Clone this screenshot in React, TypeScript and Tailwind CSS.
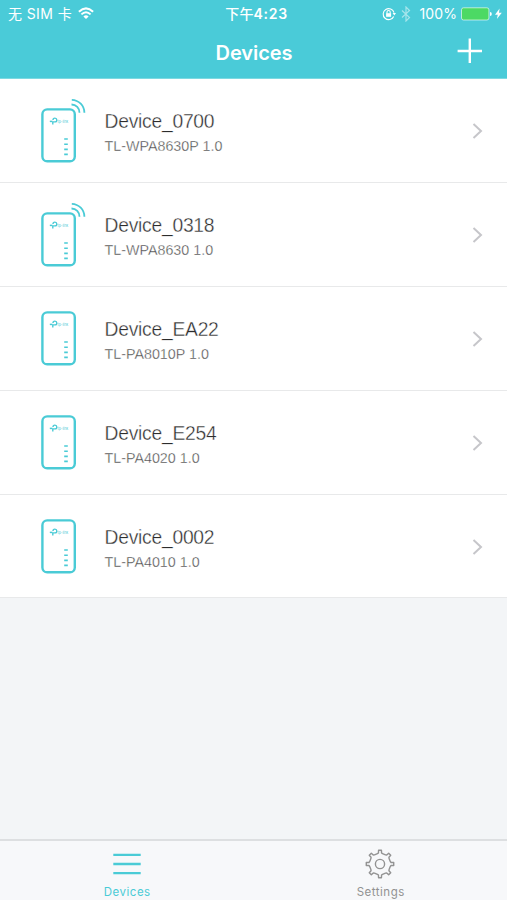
import React from 'react';

type Device = { name: string; model: string; wireless: boolean };

const devices: Device[] = [
  { name: 'Device_0700', model: 'TL-WPA8630P 1.0', wireless: true },
  { name: 'Device_0318', model: 'TL-WPA8630 1.0', wireless: true },
  { name: 'Device_EA22', model: 'TL-PA8010P 1.0', wireless: false },
  { name: 'Device_E254', model: 'TL-PA4020 1.0', wireless: false },
  { name: 'Device_0002', model: 'TL-PA4010 1.0', wireless: false },
];

function Adapter({ wireless }: { wireless: boolean }) {
  return (
    <svg width="50" height="70" viewBox={wireless ? '0 0 50 70' : '0 5 50 70'} fill="none" stroke="#4acbd6" className="block shrink-0">
      <rect x="4.4" y="14.4" width="32.4" height="51.8" rx="4.8" strokeWidth="2.4" />
      <path d="M14.8 29.4V26.9H17A1.9 1.9 0 1 0 15 25" strokeWidth="1.4" />
      <path d="M11.8 26.4H14.4" strokeWidth="1.5" />
      <text x="19.6" y="28" fontSize="4" fill="#4acbd6" stroke="none" textLength="10.5" lengthAdjust="spacingAndGlyphs" className="font-['Inter',sans-serif]">tp-link</text>
      <path d="M26.2 44H29.8M26.2 49.3H29.8M26.2 54.4H29.8M26.2 59.4H29.8" strokeWidth="1.6" />
      {wireless && <path d="M33.5 9.5A8 8 0 0 1 41.5 17.8M33.8 4.8A13 13 0 0 1 46.4 17.8" strokeWidth="1.8" />}
    </svg>
  );
}

function gearPath() {
  const profile: [number, number][] = [[-14, 10.6], [-8, 11.2], [-6, 13.8], [6, 13.8], [8, 11.2], [14, 10.6]];
  const points: string[] = [];
  for (let tooth = 0; tooth < 8; tooth++) {
    for (const [deg, r] of profile) {
      const a = ((tooth * 45 + deg) * Math.PI) / 180;
      points.push(`${(15 + r * Math.sin(a)).toFixed(2)} ${(15 - r * Math.cos(a)).toFixed(2)}`);
    }
  }
  return `M${points.join('L')}Z`;
}

function StatusBar() {
  return (
    <div className="flex h-[27px] items-center justify-between pl-[8px] pr-[5px] text-white">
      <div className="flex w-[160px] items-center">
        <span className="whitespace-nowrap text-[14px] leading-[18px] tracking-[0.4px]">无 SIM 卡</span>
        <svg width="16" height="13" viewBox="0 0 16 13" fill="none" stroke="white" strokeWidth="2" className="ml-[6px]">
          <path d="M.9 4.8Q8-2 15.1 4.8M3.4 7.4Q8 3 12.6 7.4" />
          <path d="M5.4 9.4Q8 7 10.6 9.4L8 12Z" fill="white" stroke="none" />
        </svg>
      </div>
      <span className="ml-[3px] whitespace-nowrap text-[14px] font-semibold leading-[18px] tracking-[0.7px]"><span className="font-medium tracking-[0.2px]">下午</span>4:23</span>
      <div className="flex w-[160px] items-center justify-end">
        <svg width="14" height="14" viewBox="0 0 14 14" fill="none" stroke="white" strokeWidth="1.1">
          <path d="M11.7 9.4A5.5 5.5 0 1 1 12 5.7" />
          <path d="M10.6 6H14L12.3 8.4Z" fill="white" stroke="none" />
          <rect x="4.1" y="6.2" width="5" height="3.6" fill="white" stroke="none" />
          <path d="M5 6.4V5.1a1.6 1.6 0 0 1 3.2 0V6.4" />
        </svg>
        <svg width="10" height="16" viewBox="0 0 10 16" fill="none" stroke="white" strokeOpacity=".5" strokeWidth="1.2" className="ml-[5px]">
          <path d="M1 4.5L8.5 11.5L5 15V1L8.5 4.5L1 11.5" />
        </svg>
        <span className="ml-[8px] text-[14px] leading-[18px] tracking-[0.1px]">100%</span>
        <svg width="32" height="14" viewBox="0 0 32 14" className="ml-[4px]">
          <rect x=".5" y=".8" width="27.4" height="12.2" rx="2" fill="#4cd964" stroke="white" strokeOpacity=".6" />
          <path d="M29 5Q30.8 5 30.8 7T29 9Z" fill="white" />
        </svg>
        <svg width="7" height="12" viewBox="0 0 7 12" fill="white" className="ml-[2px]"><path d="M4.6 0.5L0 6.7H2.8L1.9 11L6.8 4.8H4Z" /></svg>
      </div>
    </div>
  );
}

function Tab({ label, active, children }: { label: string; active?: boolean; children: React.ReactNode }) {
  return (
    <button className={`flex flex-1 flex-col items-center pt-[8px] ${active ? 'text-[#4acbd6]' : 'text-[#929292]'}`}>
      <span className="flex h-[30px] items-center">{children}</span>
      <span className="ml-[1px] mt-[6px] text-[11.5px] leading-[14px] tracking-[0.5px]">{label}</span>
    </button>
  );
}

export default function App() {
  return (
    <main className="flex h-[900px] w-[507px] flex-col overflow-hidden bg-[#f3f5f7] font-['Inter','Noto_Sans_CJK_SC',sans-serif]">
      <header className="h-[79px] shrink-0 border-b border-[#7dd9e1] bg-[#4acbd8]">
        <StatusBar />
        <div className="grid h-[51px] grid-cols-[1fr_auto_1fr] items-center text-white">
          <span />
          <h1 className="ml-[1px] text-[20px] font-semibold leading-[24px] tracking-[-0.05px]">Devices</h1>
          <svg width="26" height="26" viewBox="0 0 26 26" stroke="white" strokeWidth="2.4" className="mr-[24px] -mt-[4px] justify-self-end"><path d="M.6 13H25M12.8 .6V25" /></svg>
        </div>
      </header>
      <ul className="shrink-0 bg-white">
        {devices.map((device) => (
          <li key={device.name} className="flex h-[103.9px] border-b border-[#e8e9ea] pl-[38px] pr-[23px] pt-[16px]">
            <Adapter wireless={device.wireless} />
            <div className="ml-[16.5px] flex-1 pt-[14px] font-['Liberation_Sans',Arial,sans-serif] [-webkit-text-stroke:0.35px_white]">
              <div className="text-[19.3px] leading-[25px] tracking-[-0.25px] text-[#2c2c2c]">{device.name}</div>
              <div className="mt-[2px] text-[14.3px] leading-[21px] text-[#444]">{device.model}</div>
            </div>
            <svg width="12" height="18" viewBox="0 0 12 18" fill="none" stroke="#c6c6ca" strokeWidth="2" className="mt-[27px]"><path d="M1.5 2L9 9L1.5 16" /></svg>
          </li>
        ))}
      </ul>
      <div className="flex-1" />
      <nav className="flex h-[61px] shrink-0 border-t-2 border-[#dddfe1] bg-[#f7f8fa]">
        <Tab label="Devices" active>
          <svg width="28" height="24" viewBox="0 0 28 24" stroke="currentColor" strokeWidth="2.3"><path d="M.3 2.8H27.7M.3 12H27.7M.3 21.2H27.7" /></svg>
        </Tab>
        <Tab label="Settings">
          <svg width="30" height="30" viewBox="0 0 30 30" fill="none" stroke="currentColor" strokeWidth="1.4" strokeLinejoin="round"><path d={gearPath()} /><circle cx="15" cy="15" r="4.6" /></svg>
        </Tab>
      </nav>
    </main>
  );
}
